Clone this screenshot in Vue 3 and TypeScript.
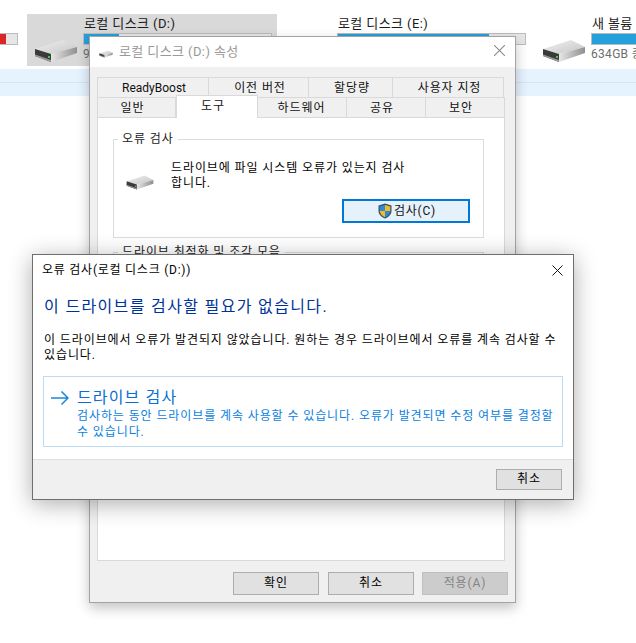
<script setup lang="ts">
interface Drive { name: string; sub: string; fill: number; color: string; selected?: boolean }
const drives: Drive[] = [
  { name: '', sub: '', fill: 94, color: '#da2626' },
  { name: '로컬 디스크 (D:)', sub: '9', fill: 18.5, color: '#26a0da', selected: true },
  { name: '로컬 디스크 (E:)', sub: '', fill: 81, color: '#26a0da' },
  { name: '새 볼륨', sub: '634GB 중', fill: 80, color: '#26a0da' },
]
const tabsTop = ['ReadyBoost', '이전 버전', '할당량', '사용자 지정']
const tabsBottom = ['일반', '도구', '하드웨어', '공유', '보안']
</script>

<template>
  <div class="stage">
    <svg class="defs" width="0" height="0" aria-hidden="true">
      <defs>
        <linearGradient id="driveTop" x1="0" y1="0" x2="1" y2="1">
          <stop offset="0" stop-color="#f2f2f2" />
          <stop offset="1" stop-color="#c4c4c4" />
        </linearGradient>
        <linearGradient id="driveSide" x1="0" y1="0" x2="1" y2="0">
          <stop offset="0" stop-color="#e6e6e6" />
          <stop offset="1" stop-color="#8f8f8f" />
        </linearGradient>
      </defs>
      <symbol id="drive" viewBox="0 0 44 24">
        <polygon points="1,10 29,1 43,8 17,15" fill="url(#driveTop)" />
        <polygon points="17,15 43,8 43,14 17,23" fill="url(#driveSide)" />
        <polygon points="1,10 17,15 17,23 1,17" fill="#3a3a3a" />
        <polygon points="1,15.5 17,21 17,23 1,17" fill="#9a9a9a" />
        <rect x="14" y="17" width="2" height="2" fill="#35d04a" />
      </symbol>
    </svg>

    <div class="drives">
      <div v-for="d in drives" :key="d.name" class="tile" :class="{ selected: d.selected }">
        <svg class="drive-icon"><use href="#drive" /></svg>
        <div class="tile-info">
          <div class="tile-name">{{ d.name }}</div>
          <div class="bar"><div class="bar-fill" :style="{ width: d.fill + '%', background: d.color }"></div></div>
          <div class="tile-sub">{{ d.sub }}</div>
        </div>
      </div>
    </div>
    <div class="row-selected"></div>
    <div class="row-selected"></div>

    <section class="win props">
      <header class="props-title">
        <svg class="title-icon"><use href="#drive" /></svg>
        <span>로컬 디스크 (D:) 속성</span>
        <svg class="close grey" viewBox="0 0 10 10"><path d="M0 0L10 10M10 0L0 10" /></svg>
      </header>
      <div class="props-body">
        <div class="tabs tabs-top">
          <div v-for="t in tabsTop" :key="t" class="tab">{{ t }}</div>
        </div>
        <div class="tabs tabs-bottom">
          <div v-for="t in tabsBottom" :key="t" class="tab" :class="{ active: t === '도구' }">{{ t }}</div>
        </div>
        <div class="panel">
          <fieldset class="group first">
            <legend>오류 검사</legend>
            <div class="group-main">
              <svg class="group-icon"><use href="#drive" /></svg>
              <p>드라이브에 파일 시스템 오류가 있는지 검사<br />합니다.</p>
            </div>
            <button class="check">
              <svg class="shield" viewBox="0 0 14 16">
                <path d="M7 0.5L13.5 2.5V8C13.5 11.5 10.5 14.3 7 15.5C3.5 14.3 0.5 11.5 0.5 8V2.5Z" fill="#39506e" />
                <path d="M7 2L12.3 3.5V8H7Z" fill="#f5b921" />
                <path d="M7 2L1.7 3.5V8H7Z" fill="#2e8bd8" />
                <path d="M7 8H12.3C12 10.8 9.8 13.1 7 14.2Z" fill="#2e8bd8" />
                <path d="M7 8H1.7C2 10.8 4.2 13.1 7 14.2Z" fill="#f5b921" />
              </svg>
              <span>검사(C)</span>
            </button>
          </fieldset>
          <fieldset class="group second">
            <legend>드라이브 최적화 및 조각 모음</legend>
          </fieldset>
        </div>
        <div class="props-actions">
          <button class="btn">확인</button>
          <button class="btn">취소</button>
          <button class="btn disabled">적용(A)</button>
        </div>
      </div>
    </section>

    <section class="win dialog">
      <header class="dialog-title">
        <span>오류 검사(로컬 디스크 (D:))</span>
        <svg class="close" viewBox="0 0 12 12"><path d="M0.5 0.5L11.5 11.5M11.5 0.5L0.5 11.5" /></svg>
      </header>
      <div class="dialog-content">
        <h1>이 드라이브를 검사할 필요가 없습니다.</h1>
        <p class="dialog-text">이 드라이브에서 오류가 발견되지 않았습니다. 원하는 경우 드라이브에서 오류를 계속 검사할 수<br />있습니다.</p>
        <div class="command">
          <svg class="arrow" viewBox="0 0 18 14"><path d="M0 7H17M10.5 0.5L17 7L10.5 13.5" /></svg>
          <div>
            <div class="command-title">드라이브 검사</div>
            <div class="command-text">검사하는 동안 드라이브를 계속 사용할 수 있습니다. 오류가 발견되면 수정 여부를 결정할<br />수 있습니다.</div>
          </div>
        </div>
      </div>
      <footer class="dialog-footer">
        <button class="btn small">취소</button>
      </footer>
    </section>
  </div>
</template>

<style>
html, body { margin: 0; background: #fff; }
</style>

<style scoped>
.stage {
  position: relative;
  width: 636px;
  height: 643px;
  overflow: hidden;
  background: #fff;
  padding-top: 14px;
  box-sizing: border-box;
  font-family: Roboto, "Noto Sans CJK KR", "Noto Sans", sans-serif;
  font-size: 12px;
  letter-spacing: 0.9px;
  color: #000;
}
.defs { position: absolute; }
.drives {
  display: flex;
  gap: 4px;
  margin-left: -227px;
  width: 1200px;
  height: 52px;
  margin-bottom: 3px;
}
.tile {
  flex: none;
  width: 250px;
  height: 52px;
  display: flex;
  position: relative;
}
.tile.selected { background: #d9d9d9; }
.drive-icon {
  width: 44px;
  height: 24px;
  margin: 25px 0 0 7px;
  flex: none;
}
.tile-info { margin-left: 5px; width: 189px; }
.tile-name {
  font-size: 13px;
  line-height: 19px;
  height: 19px;
  letter-spacing: 0.4px;
  padding-left: 1px;
  color: #1a1a1a;
  white-space: nowrap;
}
.bar {
  height: 12px;
  background: #e6e6e6;
  border: 1px solid #bcbcbc;
  box-sizing: border-box;
}
.bar-fill { height: 100%; }
.tile-sub {
  font-size: 12px;
  line-height: 19px;
  letter-spacing: 0.3px;
  color: #6d6d6d;
  white-space: nowrap;
}
.row-selected {
  height: 13px;
  background: #e5f3ff;
  border-bottom: 1px solid #d9e3ec;
}
.row-selected + .row-selected { border-bottom: 0; }
.win {
  position: absolute;
  box-sizing: border-box;
  background: #f0f0f0;
}
.props {
  left: 89px;
  top: 36px;
  width: 427px;
  height: 567px;
  border: 1px solid #a3a3a3;
  box-shadow: 0 5px 12px rgba(0, 0, 0, 0.24);
  display: flex;
  flex-direction: column;
}
.props-title {
  height: 30px;
  box-sizing: border-box;
  background: #fff;
  display: flex;
  align-items: center;
  padding: 0 10px 3px 9px;
  color: #999;
  font-size: 13px;
  letter-spacing: 0.4px;
  flex: none;
}
.title-icon { width: 14px; height: 8px; margin: 6px 6px 0 0; }
.close {
  margin-left: auto;
  width: 10px;
  height: 10px;
  fill: none;
  stroke: #000;
  stroke-width: 1;
}
.close.grey { stroke: #8c8c8c; width: 11px; height: 11px; }
.props-body {
  flex: 1;
  display: flex;
  flex-direction: column;
  padding: 10px 11px 8px 7px;
}
.tabs { display: grid; height: 20px; flex: none; }
.tabs-top { grid-template-columns: 112px 100px 84px 111px; width: 407px; }
.tabs-bottom { grid-template-columns: 79px 82px 89px 79px 79px; width: 408px; }
.tab {
  box-sizing: border-box;
  border: 1px solid #d9d9d9;
  border-left-width: 0;
  border-bottom-width: 0;
  background: #f0f0f0;
  text-align: center;
  line-height: 20px;
  white-space: nowrap;
  color: #111;
}
.tabs-top .tab { padding-left: 3px; }
.tabs-top .tab:first-child { letter-spacing: 0; padding-left: 2px; }
.tabs-bottom .tab { padding-right: 8px; }
.tabs-bottom .tab:nth-child(3) { padding-right: 1px; }
.tab:first-child { border-left-width: 1px; }
.tab.active {
  background: #fff;
  height: 23px;
  margin-top: -2px;
  border-left-width: 1px;
  position: relative;
  z-index: 1;
  border-bottom: 0;
}
.panel {
  flex: none;
  box-sizing: border-box;
  height: 444px;
  width: 408px;
  background: #fff;
  border: 1px solid #d9d9d9;
  padding: 12px 20px 0 15px;
}
.group {
  margin: 0;
  border: 1px solid #dcdcdc;
  padding: 0;
  min-width: 0;
  box-sizing: border-box;
  position: relative;
}
.group legend {
  margin-left: 4px;
  padding: 0 4px;
  font-size: 12px;
  line-height: 18px;
  color: #222;
}
.group.first { height: 108px; }
.group.second { height: 120px; margin-top: 5px; }
.group-main { display: flex; align-items: flex-start; }
.group-main p {
  margin: 13px 0 0 17px;
  line-height: 15px;
  white-space: nowrap;
}
.group-icon { width: 28px; height: 17px; margin: 26px 0 0 12px; flex: none; }
.check {
  position: absolute;
  right: 13px;
  bottom: 14px;
  width: 128px;
  height: 24px;
  box-sizing: border-box;
  background: #e5f1fb;
  border: 2px solid #0078d7;
  display: flex;
  align-items: center;
  justify-content: center;
  padding: 0 0 3px 2px;
  font: inherit;
  letter-spacing: 0.8px;
  color: #111;
}
.shield { width: 14px; height: 16px; margin: 3px 2px 0 0; }
.props-actions {
  display: flex;
  justify-content: flex-end;
  margin-top: 11px;
  margin-right: -4px;
  gap: 9px;
}
.btn {
  width: 86px;
  height: 23px;
  box-sizing: border-box;
  background: #e1e1e1;
  border: 1px solid #adadad;
  font: inherit;
  letter-spacing: 0.9px;
  color: #000;
  padding: 0 0 1px;
  line-height: 18px;
}
.btn.disabled { background: #cccccc; border-color: #bfbfbf; color: #838383; margin-left: -1px; }
.btn.small { width: 66px; height: 21px; line-height: 17px; }
.dialog {
  left: 32px;
  top: 254px;
  width: 542px;
  height: 246px;
  background: #fff;
  border: 1px solid #6e6e6e;
  box-shadow: 0 4px 22px rgba(0, 0, 0, 0.32);
  display: flex;
  flex-direction: column;
}
.dialog-title {
  flex: none;
  height: 30px;
  box-sizing: border-box;
  display: flex;
  align-items: center;
  padding: 0 10px 3px 9px;
  font-size: 12px;
  letter-spacing: 0.75px;
}
.dialog-title .close { width: 11px; height: 11px; margin-top: 3px; }
.dialog-content { flex: 1; min-height: 0; padding: 9px 10px 0 10px; }
h1 {
  margin: 0 0 0 1px;
  font-size: 16px;
  font-weight: 400;
  line-height: 26px;
  letter-spacing: 1.35px;
  color: #003399;
  white-space: nowrap;
}
.dialog-text {
  margin: 13px 0 0 1px;
  line-height: 15px;
  white-space: nowrap;
}
.command {
  margin-top: 13px;
  height: 71px;
  box-sizing: border-box;
  border: 1px solid #bcdcf5;
  display: flex;
  padding: 10px 0 0 7px;
}
.arrow {
  width: 18px;
  height: 14px;
  margin: 4px 8px 0 0;
  fill: none;
  stroke: #1a86de;
  stroke-width: 1.5;
  flex: none;
}
.command-title {
  font-size: 16px;
  line-height: 21px;
  letter-spacing: 1.15px;
  color: #0a6fd0;
}
.command-text {
  font-size: 12px;
  line-height: 16px;
  color: #0a7fe0;
  white-space: nowrap;
}
.dialog-footer {
  flex: none;
  height: 40px;
  box-sizing: border-box;
  background: #f0f0f0;
  border-top: 1px solid #dfdfdf;
  display: flex;
  justify-content: flex-end;
  align-items: flex-start;
  padding: 9px 11px 0 0;
}
</style>
